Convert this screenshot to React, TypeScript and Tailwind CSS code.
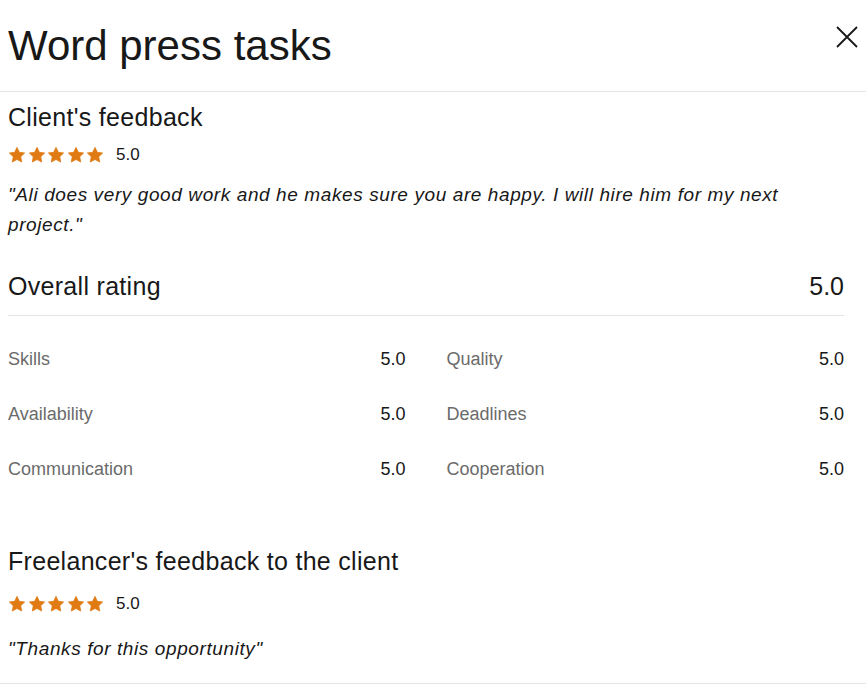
import React from 'react'

const metrics = [
  { label: 'Skills', value: '5.0' },
  { label: 'Quality', value: '5.0' },
  { label: 'Availability', value: '5.0' },
  { label: 'Deadlines', value: '5.0' },
  { label: 'Communication', value: '5.0' },
  { label: 'Cooperation', value: '5.0' },
]

function Star() {
  return (
    <svg viewBox="0 0 24 24" className="h-[18px] w-[18px]" fill="#e07a12">
      <path d="M12 1.8l3.1 6.6 7.1.9-5.2 5 1.3 7.1L12 18l-6.3 3.4 1.3-7.1-5.2-5 7.1-.9z" strokeLinejoin="round" stroke="#e07a12" strokeWidth="1" />
    </svg>
  )
}

function Stars({ score }: { score: string }) {
  return (
    <div className="flex h-[24px] items-center">
      <div className="flex items-center gap-[1.5px]">
        {[0, 1, 2, 3, 4].map((i) => (
          <Star key={i} />
        ))}
      </div>
      <span className="ml-[12px] text-[17px] text-[#181818]">{score}</span>
    </div>
  )
}

export default function App() {
  return (
    <div className="min-h-screen bg-white font-['Liberation_Sans',Arial,sans-serif] text-[#181818]">
      {/* Header */}
      <div className="flex h-[92px] items-start justify-between border-b border-[#e4e4e4] pl-2 pr-[7px]">
        <h1 className="mt-[25px] text-[42px] leading-[42px]">Word press tasks</h1>
        <button className="mt-[25px] text-[#181818]">
          <svg viewBox="0 0 24 24" className="h-[24px] w-[24px]" fill="none" stroke="currentColor" strokeWidth="1.8">
            <path d="M2 2l20 20M22 2L2 22" />
          </svg>
        </button>
      </div>

      <div className="border-b border-[#e4e4e4] pb-[19px] pl-2 pr-[22px]">
        {/* Client's feedback */}
        <h2 className="mt-[9px] text-[25px] leading-[32px] tracking-[0.3px]">Client's feedback</h2>
        <div className="mt-[10px]">
          <Stars score="5.0" />
        </div>
        <p className="mt-[13px] text-[19px] italic leading-[30px] tracking-[0.6px]">
          "Ali does very good work and he makes sure you are happy. I will hire him for my next project."
        </p>

        {/* Overall rating */}
        <div className="mt-[30px] flex items-center justify-between border-b border-[#e4e4e4] pb-[13px]">
          <span className="text-[25px] leading-[32px] tracking-[0.3px]">Overall rating</span>
          <span className="text-[25px] leading-[32px]">5.0</span>
        </div>

        <div className="mt-[16px] grid grid-cols-2 gap-x-[41px]">
          {metrics.map((m) => (
            <div key={m.label} className="flex h-[55px] items-center justify-between text-[18px]">
              <span className="text-[#6b6b6b]">{m.label}</span>
              <span className="text-[#181818]">{m.value}</span>
            </div>
          ))}
        </div>

        {/* Freelancer's feedback */}
        <h2 className="mt-[48px] text-[25px] leading-[32px] tracking-[0.3px]">Freelancer's feedback to the client</h2>
        <div className="mt-[15px]">
          <Stars score="5.0" />
        </div>
        <p className="mt-[18px] text-[19px] italic leading-[30px] tracking-[0.6px]">"Thanks for this opportunity"</p>
      </div>
    </div>
  )
}
